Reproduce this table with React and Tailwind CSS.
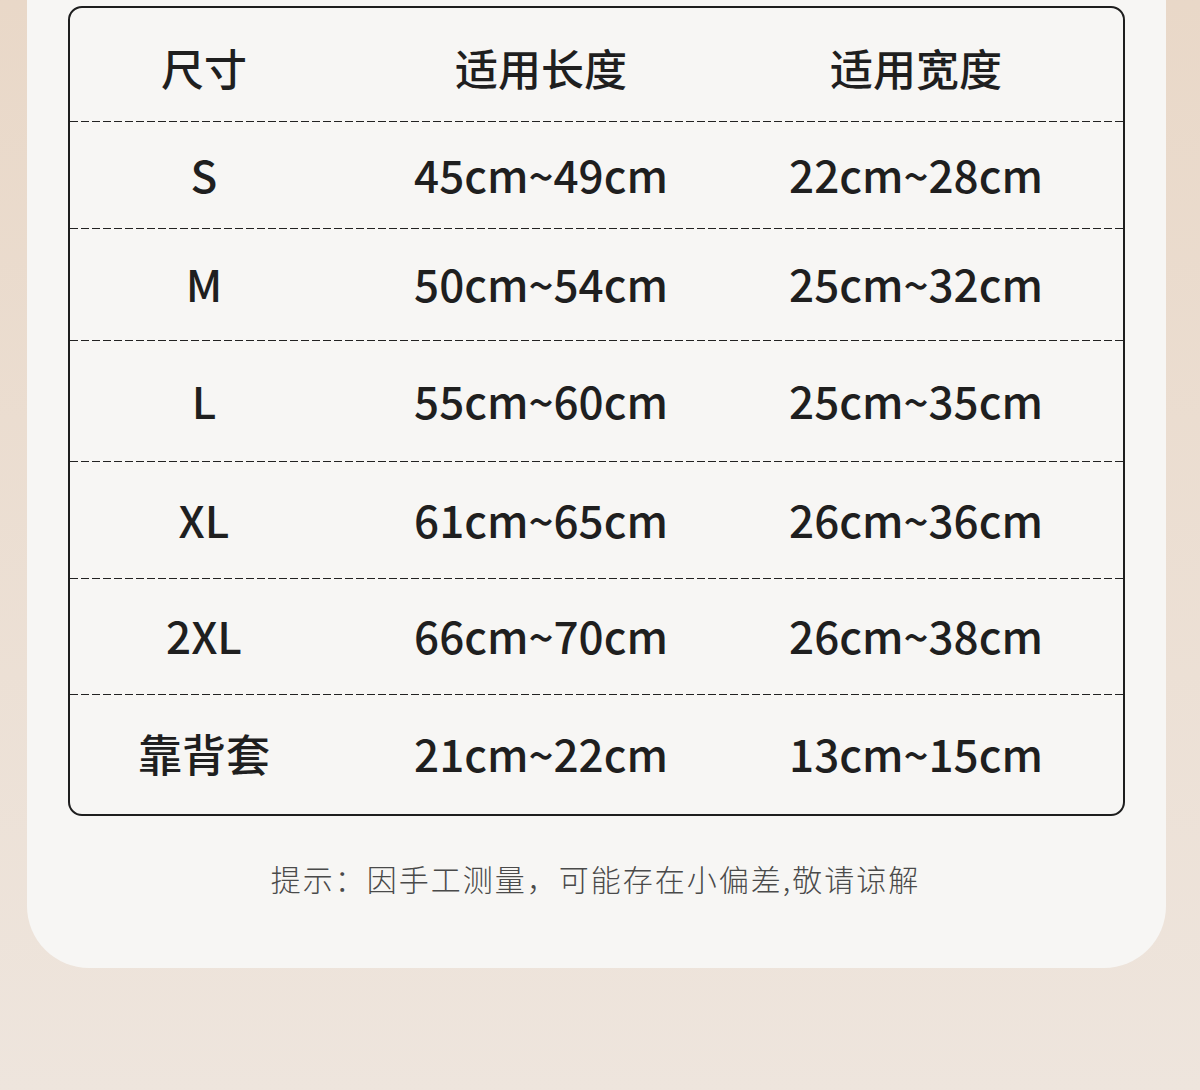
const ROWS = [
  { size: 'S', len: '45cm~49cm', wid: '22cm~28cm', h: 'h-[106px]' },
  { size: 'M', len: '50cm~54cm', wid: '25cm~32cm', h: 'h-[111px]' },
  { size: 'L', len: '55cm~60cm', wid: '25cm~35cm', h: 'h-[120px]' },
  { size: 'XL', len: '61cm~65cm', wid: '26cm~36cm', h: 'h-[116px]' },
  { size: '2XL', len: '66cm~70cm', wid: '26cm~38cm', h: 'h-[115px]' },
  { size: '靠背套', len: '21cm~22cm', wid: '13cm~15cm', h: 'h-[119px]' },
]

function Dash() {
  return <div className="h-px w-full bg-[repeating-linear-gradient(90deg,#222_0_8px,transparent_8px_11px)]" />
}

function Row({ a, b, c, h, head }) {
  return (
    <div className={`grid grid-cols-[268px_406px_344px] items-center ${h} ${head ? 'text-[43px] pt-[6px]' : 'text-[44px] pb-[3px]'}`}>
      <div className="text-center">{a}</div>
      <div className="text-center">{b}</div>
      <div className="text-center">{c}</div>
    </div>
  )
}

export default function App() {
  return (
    <div
      className="w-[1200px] h-[1090px] overflow-hidden bg-gradient-to-b from-[#e9d8c8] to-[#eee5dd] pl-[27px] pr-[34px]"
      style={{ fontFamily: '"Noto Sans CJK SC", "Noto Sans", sans-serif' }}
    >
      <div className="h-[968px] bg-[#f7f6f4] rounded-b-[62px] pl-[41px] pt-[6px]">
        <div className="w-[1057px] border-2 border-[#1e1e1e] rounded-[14px] text-[#1f1f1f] font-medium leading-none">
          <Row a="尺寸" b="适用长度" c="适用宽度" h="h-[113px]" head />
          {ROWS.map(r => (
            <div key={r.size}>
              <Dash />
              <Row a={r.size} b={r.len} c={r.wid} h={r.h} />
            </div>
          ))}
        </div>
        <p className="mt-[47px] w-[1055px] text-center text-[30px] text-[#4a4a4a] font-light tracking-[2px] leading-none">
          提示：因手工测量，可能存在小偏差,敬请谅解
        </p>
      </div>
    </div>
  )
}
